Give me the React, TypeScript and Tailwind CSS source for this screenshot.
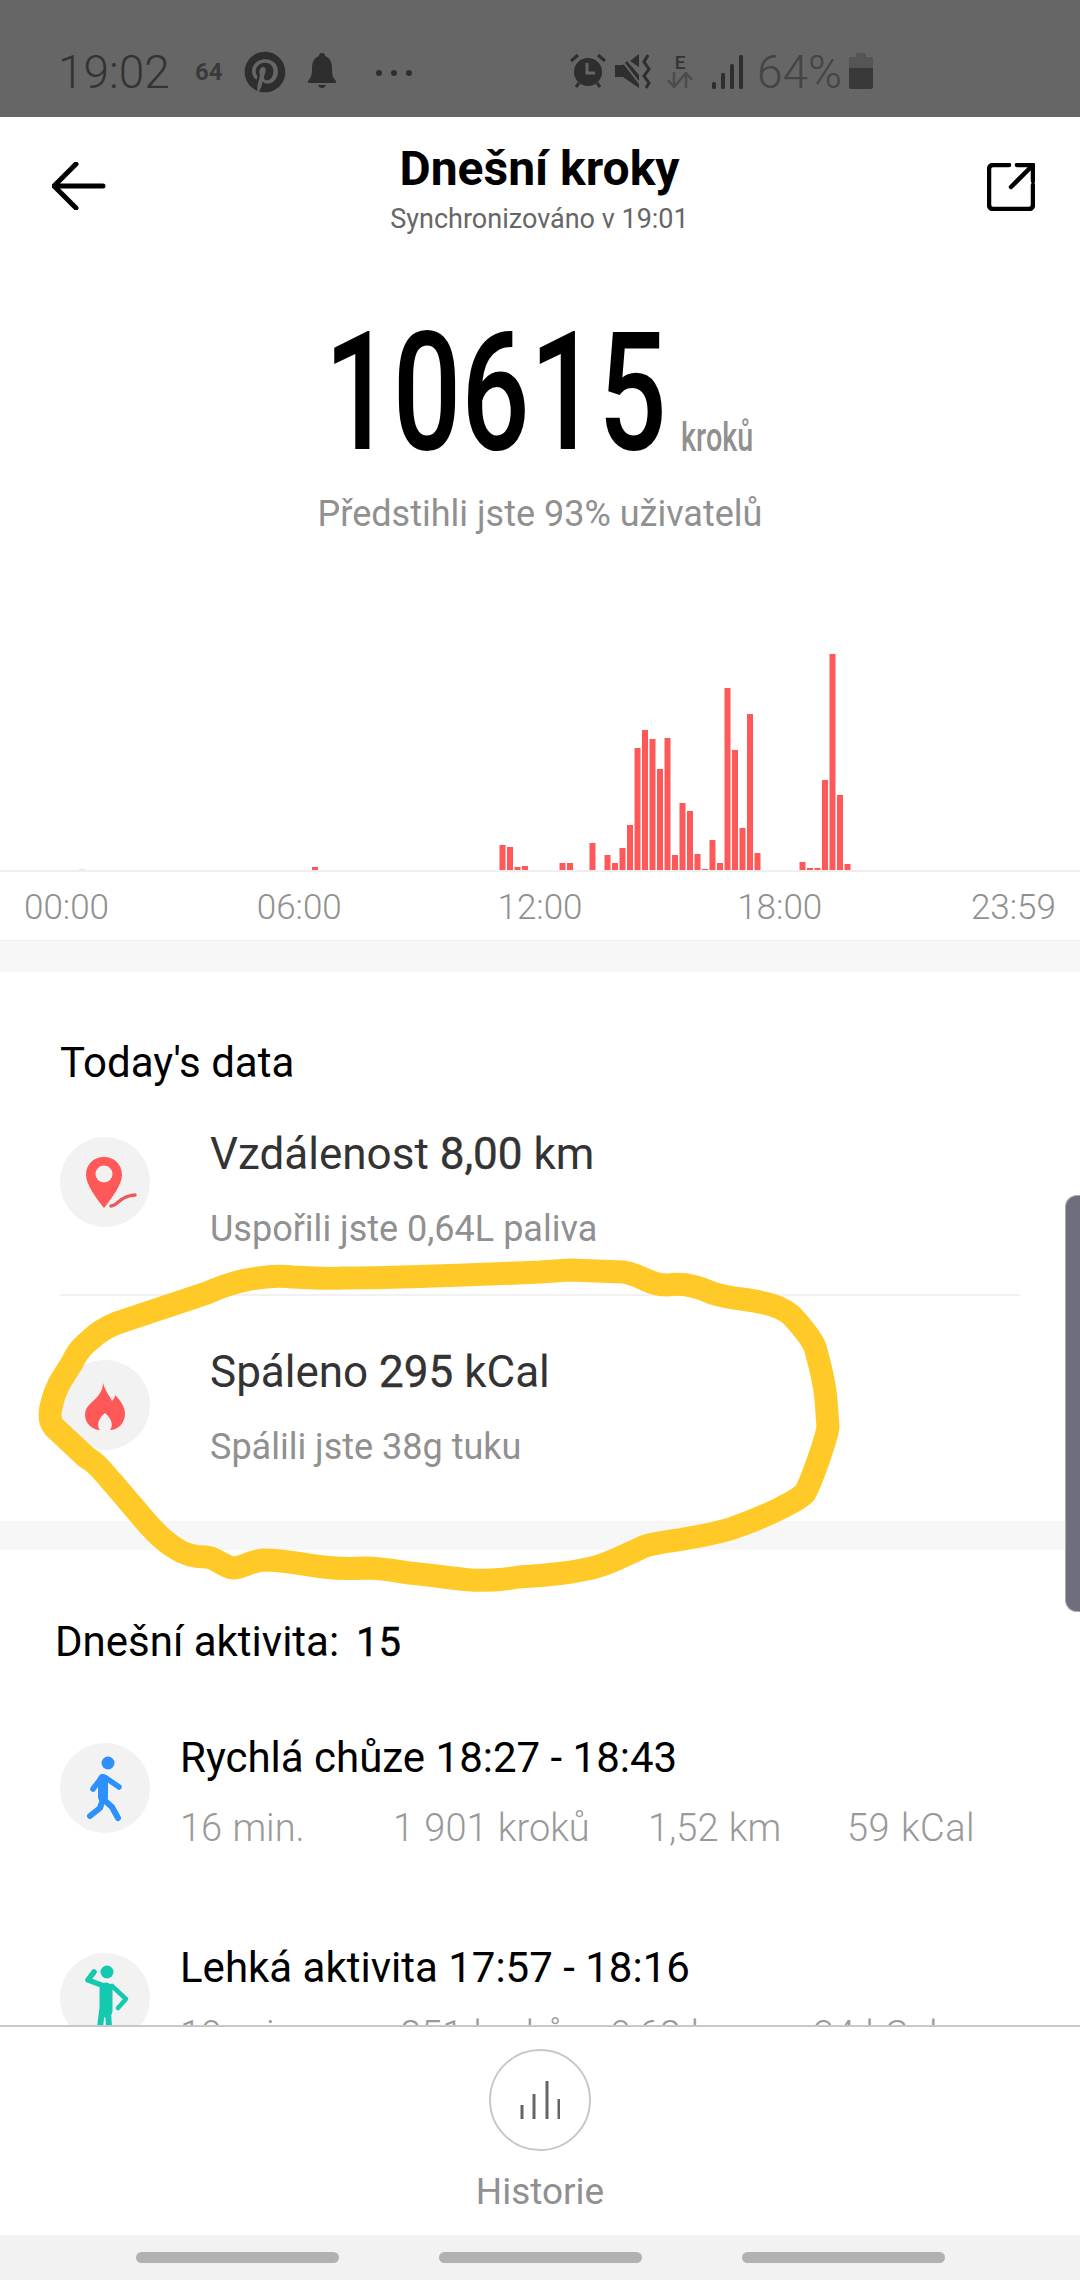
import { FaPinterest } from "react-icons/fa";

const font = "font-['Roboto',sans-serif]";

// [slot, height] pairs, slot pitch is 7.5px starting at x=499
const bars: [number, number][] = [
  [0, 25], [1, 23], [2, 3], [3, 4], [8, 7], [9, 7], [12, 27], [14, 15], [15, 7], [16, 22],
  [17, 45], [18, 122], [19, 140], [20, 131], [21, 101], [22, 132], [23, 15], [24, 67], [25, 59],
  [26, 16], [27, 1], [28, 30], [29, 7], [30, 182], [31, 120], [32, 42], [33, 156], [34, 17],
  [40, 8], [41, 2], [42, 2], [43, 90], [44, 216], [45, 75], [46, 6],
];

const stroke =
  "M 570 1270 L 623 1272 C 640 1274 650 1286 668 1285 C 680 1283 695 1285 712 1293 C 730 1299 750 1299 764 1303 C 778 1306 785 1310 791 1315 C 805 1330 812 1340 815 1347 C 820 1365 825 1385 826 1400 L 828 1427 C 826 1440 812 1480 805 1493 C 798 1500 790 1503 781 1508 C 765 1516 750 1522 733 1528 C 715 1534 695 1537 678 1540 C 665 1542 650 1544 643 1547 C 625 1555 610 1564 592 1568 C 575 1572 555 1575 519 1577 C 500 1580 485 1581 471 1580 C 450 1578 430 1575 409 1573 C 395 1571 380 1568 367 1568 C 350 1569 340 1569 323 1567 C 305 1565 285 1560 264 1560 C 250 1561 243 1568 233 1568 C 222 1566 215 1557 206 1557 C 192 1557 182 1553 175 1548 C 165 1542 155 1532 147 1523 L 113 1483 C 105 1475 100 1465 86 1457 L 54 1427 C 48 1420 50 1410 52 1403 C 56 1385 65 1375 72 1363 C 78 1350 84 1345 90 1340 C 98 1332 107 1327 117 1323 L 165 1307 L 207 1293 C 225 1285 240 1280 258 1278 C 270 1276 285 1276 293 1277 C 310 1278 330 1279 344 1278 C 390 1278 450 1276 540 1272 L 570 1270";

function PinIcon() {
  return (
    <svg viewBox="0 0 90 90" className="w-[90px] h-[90px]">
      <path d="M44 20 C33 20 26 28 26 38 C26 48 37 62 44 71 C51 62 62 48 62 38 C62 28 55 20 44 20 Z" fill="#ff5858" />
      <circle cx="44" cy="37" r="8.5" fill="#f2f2f2" />
      <path d="M51 69 C58 69 59 59 75 58" fill="none" stroke="#ea5a5a" strokeWidth="3.5" strokeLinecap="round" />
    </svg>
  );
}

function FlameIcon() {
  return (
    <svg viewBox="0 0 90 90" className="w-[90px] h-[90px]">
      <path
        d="M43 23 C46 33 50 36 52 41 C54 39 55 37 55 35 C61 41 65 47 65 54 C65 63 58 70 50 70 C53 66 53 60 45 53 C37 60 37 66 40 70 C32 70 25 63 25 55 C25 46 33 42 38 36 C41 32 43 28 43 23 Z"
        fill="#ff5858"
      />
    </svg>
  );
}

function WalkIcon() {
  return (
    <svg viewBox="0 0 90 90" className="w-[90px] h-[90px]" fill="none" stroke="#2e90fa" strokeLinecap="round" strokeLinejoin="round">
      <circle cx="48" cy="20" r="6.5" fill="#2e90fa" stroke="none" />
      <path d="M43 36 L43 54" strokeWidth="10" />
      <path d="M42 34 L33 46" strokeWidth="5.5" />
      <path d="M46 35 L59 44" strokeWidth="5.5" />
      <path d="M43 56 L40 65 L30 73" strokeWidth="6" />
      <path d="M43 56 L52 64 L58 75" strokeWidth="6" />
    </svg>
  );
}

function StretchIcon() {
  return (
    <svg viewBox="0 0 90 90" className="w-[90px] h-[90px]" fill="none" stroke="#14c9b0" strokeLinecap="round" strokeLinejoin="round">
      <circle cx="47" cy="19" r="6.5" fill="#14c9b0" stroke="none" />
      <path d="M34 19 L28 27 L44 33" strokeWidth="5.5" />
      <path d="M46 36 L46 58" strokeWidth="13" />
      <path d="M52 33 L66 46 L58 55" strokeWidth="4.5" />
      <path d="M42 58 L38 90" strokeWidth="6" />
      <path d="M48 58 L50 90" strokeWidth="6" />
    </svg>
  );
}

function Bubble({ children, top }: { children: React.ReactNode; top: string }) {
  return <div className={`w-[90px] h-[90px] rounded-full bg-[#f2f2f2] shrink-0 ${top}`}>{children}</div>;
}

export default function App() {
  return (
    <div className={`${font} relative h-[2280px] w-[1080px] overflow-hidden bg-white flex flex-col`}>
      {/* STATUS BAR */}
      <div className="h-[117px] shrink-0 bg-[#666666] flex items-start pt-[47px] pl-[58px] text-[#333333]">
        <span className="w-[137px] text-[46px] leading-[50px] font-light">19:02</span>
        <span className="w-[49px] text-[24px] leading-[50px] font-bold text-[#3a3a3a]">64</span>
        <FaPinterest className="w-[42px] h-[42px] mt-[4px] text-[#2e2e2e]" />
        <svg viewBox="0 0 28 36" className="w-[28px] h-[36px] ml-[22px] mt-[6px]" fill="#2e2e2e">
          <path d="M14 0 a3 3 0 0 1 3 3 C23 5 24 11 24 16 C24 22 25 25 28 28 L28 30 L0 30 L0 28 C3 25 4 22 4 16 C4 11 5 5 11 3 A3 3 0 0 1 14 0 Z" />
          <path d="M10 32 L18 32 C17 36 11 36 10 32 Z" />
        </svg>
        <div className="flex gap-[9px] ml-[40px] mt-[23px]">
          <div className="w-[6px] h-[6px] rounded-full bg-[#2e2e2e]" />
          <div className="w-[6px] h-[6px] rounded-full bg-[#2e2e2e]" />
          <div className="w-[6px] h-[6px] rounded-full bg-[#2e2e2e]" />
        </div>
        <svg viewBox="0 0 38 36" className="w-[38px] h-[36px] ml-[157px] mt-[6px]">
          <circle cx="19" cy="19" r="14" fill="#2e2e2e" />
          <path d="M18 10 L18 20 L26 20" fill="none" stroke="#666666" strokeWidth="3" />
          <path d="M2 8 L9 2 M36 8 L29 2 M7 34 L10 30 M31 34 L28 30" stroke="#2e2e2e" strokeWidth="3" />
        </svg>
        <svg viewBox="0 0 36 36" className="w-[36px] h-[36px] ml-[8px] mt-[6px]" fill="#2e2e2e">
          <path d="M0 12 L8 12 L12 8 L24 22 L24 35 L8 24 L0 24 Z" />
          <path d="M15 8 L24 1 L24 14 Z" />
          <path d="M2 1 L25 31" stroke="#666666" strokeWidth="2" />
          <path d="M33 2 L29 9 L34 16 L29 23 L34 30 L31 35" fill="none" stroke="#2e2e2e" strokeWidth="3" />
        </svg>
        <div className="w-[26px] ml-[16px] mt-[7px] flex flex-col items-center">
          <span className="text-[19px] leading-[18px] font-medium text-[#333333]">E</span>
          <svg viewBox="0 0 26 16" className="w-[26px] h-[16px]" fill="none" stroke="#4c4c4c" strokeWidth="2.5">
            <path d="M7 0 L7 14 M1 8 L7 15 L13 8" />
            <path d="M19 16 L19 2 M13 8 L19 1 L25 8" />
          </svg>
        </div>
        <svg viewBox="0 0 31 34" className="w-[31px] h-[34px] ml-[19px] mt-[8px]" fill="#2e2e2e">
          <rect x="0" y="27" width="4" height="7" rx="1.5" />
          <rect x="9" y="18" width="4" height="16" rx="1.5" />
          <rect x="18" y="9" width="4" height="25" rx="1.5" />
          <rect x="27" y="0" width="4" height="34" rx="1.5" />
        </svg>
        <span className="w-[90px] ml-[14px] text-[46px] leading-[50px] font-light text-[#444444]">64%</span>
        <svg viewBox="0 0 24 36" className="w-[24px] h-[36px] ml-[2px] mt-[6px]">
          <path d="M7 0 H17 V4 H22 a2 2 0 0 1 2 2 V15 H0 V6 a2 2 0 0 1 2 -2 H7 Z" fill="#555555" />
          <path d="M0 15 H24 V34 a2 2 0 0 1 -2 2 H2 a2 2 0 0 1 -2 -2 Z" fill="#393939" />
        </svg>
      </div>

      <main className="flex-1 min-h-0 overflow-hidden">
        {/* HEADER */}
        <div className="h-[147px] flex pl-[52px] pr-[45px]">
          <div className="w-[60px] pt-[45px]">
            <svg viewBox="0 0 54 48" className="w-[54px] h-[48px]" fill="none" stroke="#000" strokeWidth="5" strokeLinecap="round" strokeLinejoin="round">
              <path d="M24 2 L2 24 L24 46 M2 24 L51 24" />
            </svg>
          </div>
          <div className="flex-1 flex flex-col items-center pt-[26px]">
            <h1 className="text-[48px] leading-[52px] font-bold text-black">Dnešní kroky</h1>
            <p className="text-[27px] leading-[30px] mt-[9px] text-[#666666] whitespace-nowrap">Synchronizováno v 19:01</p>
          </div>
          <div className="w-[68px] pt-[46px] flex justify-end">
            <svg viewBox="0 0 48 48" className="w-[48px] h-[48px]" fill="none" stroke="#000" strokeWidth="4.5" strokeLinecap="round" strokeLinejoin="round">
              <path d="M22 2 H6 a4 4 0 0 0 -4 4 V42 a4 4 0 0 0 4 4 H42 a4 4 0 0 0 4 -4 V22" />
              <path d="M24 24 L46 2 M30 2 H46 V18" />
            </svg>
          </div>
        </div>

        {/* STEPS */}
        <div className="mt-[46px] h-[165px] flex justify-center">
          <div className="w-[334px] flex justify-center">
            <span className="text-[165px] leading-[165px] font-medium text-black scale-x-[0.73] whitespace-nowrap">10615</span>
          </div>
          <div className="w-[70px] ml-[20px] flex justify-center items-end">
            <span className="text-[40px] leading-[40px] mb-[17px] font-medium text-[#909090] scale-x-[0.72] whitespace-nowrap">kroků</span>
          </div>
        </div>
        <p className="mt-[19px] text-center text-[36px] leading-[40px] text-[#909090]">Předstihli jste 93% uživatelů</p>

        {/* CHART */}
        <svg viewBox="0 0 1080 230" className="mt-[106px] w-[1080px] h-[230px] block" fill="#ff5858">
          <rect x="79" y="229" width="6" height="1" fill="#ffd8d8" />
          <rect x="312" y="227" width="6" height="3" />
          {bars.map(([slot, h]) => (
            <rect key={slot} x={499.5 + slot * 7.5} y={230 - h} width={6} height={h} />
          ))}
        </svg>
        <div className="h-[2px] bg-[#eeeeee]" />
        <div className="mt-[16px] flex justify-between px-[24px] text-[35px] leading-[40px] text-[#909090] font-light">
          <span>00:00</span>
          <span className="-translate-x-[4px]">06:00</span>
          <span>12:00</span>
          <span className="translate-x-[3px]">18:00</span>
          <span>23:59</span>
        </div>
        <div className="mt-[12px] h-[32px] bg-[#f7f7f7] border-t border-[#eeeeee]" />

        {/* TODAY'S DATA */}
        <div className="px-[60px]">
          <h2 className="pt-[67px] text-[42px] leading-[48px] text-black">Today's data</h2>
          <div className="mt-[41px] flex">
            <Bubble top="mt-[9px]">
              <PinIcon />
            </Bubble>
            <div className="ml-[60px]">
              <p className="text-[44px] leading-[52px] text-[#333333]">
                Vzdálenost <span className="[-webkit-text-stroke:0.4px_#333333]">8,00</span> km
              </p>
              <p className="mt-[27px] text-[36px] leading-[44px] text-[#909090]">Uspořili jste 0,64L paliva</p>
            </div>
          </div>
          <div className="mt-[43px] h-[2px] bg-[#f1f1f1]" />
          <div className="mt-[50px] flex">
            <Bubble top="mt-[14px]">
              <FlameIcon />
            </Bubble>
            <div className="ml-[60px]">
              <p className="text-[44px] leading-[52px] text-[#333333]">
                Spáleno <span className="[-webkit-text-stroke:0.4px_#333333]">295</span> kCal
              </p>
              <p className="mt-[27px] text-[36px] leading-[44px] text-[#909090]">Spálili jste 38g tuku</p>
            </div>
          </div>
        </div>
        <div className="mt-[52px] h-[29px] bg-[#f7f7f7]" />

        {/* TODAY'S ACTIVITY */}
        <h2 className="pl-[55px] pt-[68px] text-[42px] leading-[48px] text-black whitespace-pre">
          Dnešní aktivita:  <span className="-ml-[4px] text-[40px] [-webkit-text-stroke:0.4px_#000000]">15</span>
        </h2>
        <div className="mt-[67px] flex pl-[60px]">
          <Bubble top="mt-[9px]">
            <WalkIcon />
          </Bubble>
          <div className="ml-[30px]">
            <p className="text-[42px] leading-[48px] text-black">Rychlá chůze 18:27 - 18:43</p>
            <div className="mt-[24px] flex text-[38px] leading-[44px] text-[#999999] font-light [word-spacing:1px]">
              <span className="w-[213px]">16 min.</span>
              <span className="w-[255px]">1 901 kroků</span>
              <span className="w-[199px]">1,52 km</span>
              <span className="tracking-[0.5px]">59 kCal</span>
            </div>
          </div>
        </div>
        <div className="mt-[94px] flex pl-[60px]">
          <Bubble top="mt-[9px]">
            <StretchIcon />
          </Bubble>
          <div className="ml-[30px]">
            <p className="text-[42px] leading-[48px] text-black">Lehká aktivita 17:57 - 18:16</p>
            <div className="mt-[21px] flex text-[38px] leading-[44px] text-[#999999] font-light [word-spacing:1px]">
              <span className="w-[220px]">19 min.</span>
              <span className="w-[210px]">851 kroků</span>
              <span className="w-[203px]">0,68 km</span>
              <span>34 kCal</span>
            </div>
          </div>
        </div>
      </main>

      {/* HISTORY */}
      <div className="h-[210px] shrink-0 bg-white border-t-2 border-[#c8c8c8] flex flex-col items-center pt-[22px]">
        <div className="w-[102px] h-[102px] rounded-full border-2 border-[#c8c8c8] flex items-center justify-center">
          <svg viewBox="0 0 40 40" className="w-[40px] h-[40px]" stroke="#666666" strokeWidth="3">
            <path d="M2 39 V25 M14 39 V14 M27 39 V1 M39 39 V19" />
          </svg>
        </div>
        <span className="mt-[21px] text-[37px] leading-[40px] text-[#909090]">Historie</span>
      </div>

      {/* NAV */}
      <div className="h-[45px] shrink-0 bg-[#f2f2f2] flex items-center justify-center gap-[100px]">
        <div className="w-[203px] h-[11px] rounded-full bg-[#b1b1b1]" />
        <div className="w-[203px] h-[11px] rounded-full bg-[#b1b1b1]" />
        <div className="w-[203px] h-[11px] rounded-full bg-[#b1b1b1]" />
      </div>

      {/* EDGE HANDLE */}
      <div className="absolute right-0 top-[1195px] w-[15px] h-[417px] bg-[#6f6e7c] border-l border-y border-[#aaaaaa] rounded-l-xl" />

      {/* MARKER ANNOTATION */}
      <svg viewBox="0 0 1080 2280" className="absolute inset-0 w-[1080px] h-[2280px] pointer-events-none" fill="none">
        <path d={stroke} stroke="#ffca28" strokeWidth="23" strokeLinecap="round" strokeLinejoin="round" />
      </svg>
    </div>
  );
}
